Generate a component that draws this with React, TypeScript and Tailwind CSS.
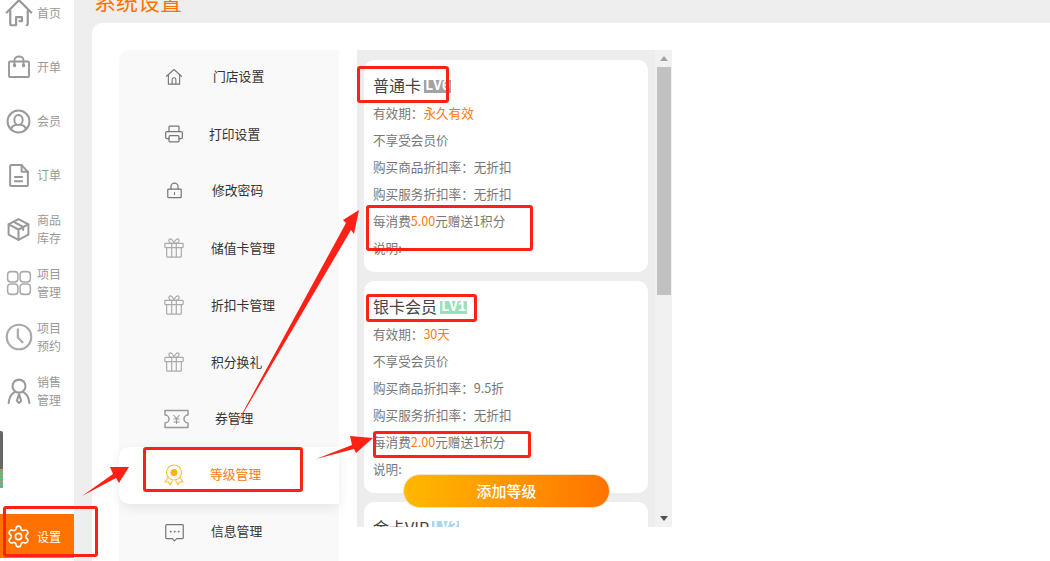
import type { ReactNode } from "react";
import { Settings } from "lucide-react";

const cjk = "font-['Noto_Sans_CJK_SC','Liberation_Sans',sans-serif]";

function Ico(props: { size: number; children: ReactNode; color?: string; sw?: number }) {
  return (
    <svg
      width={props.size}
      height={props.size}
      viewBox="0 0 24 24"
      fill="none"
      stroke={props.color ?? "#999"}
      strokeWidth={props.sw ?? 1.9}
      strokeLinecap="round"
      strokeLinejoin="round"
    >
      {props.children}
    </svg>
  );
}

const homeBig = (
  <Ico size={28}>
    <path d="M1.500 11.500 12 1l10.500 10.500" />
    <path d="M4.500 10v11.500a1 1 0 0 0 1 1h4v-7h5v3.500h-2M18.500 22.500a1 1 0 0 0 1-1V10" />
  </Ico>
);
const bag = (
  <Ico size={24}>
    <rect x="2" y="6.500" width="20" height="15.500" rx="1" />
    <path d="M7.500 10V5a4.500 3.500 0 0 1 9 0v5" />
    <circle cx="7.500" cy="10.500" r=".8" fill="#999" />
    <circle cx="16.500" cy="10.500" r=".8" fill="#999" />
  </Ico>
);
const member = (
  <Ico size={25}>
    <circle cx="12" cy="12" r="10.500" />
    <ellipse cx="12" cy="10.500" rx="4" ry="4.800" />
    <path d="M5 19.500c.5-3 3.500-4 5-4.300M19 19.500c-.5-3-3.500-4-5-4.300" />
  </Ico>
);
const order = (
  <Ico size={25}>
    <path d="M4 3a1 1 0 0 1 1-1h10l6 6.500V21a1 1 0 0 1-1 1H5a1 1 0 0 1-1-1Z" />
    <path d="M15 2v6.500h6M8.500 13.500h7M8.500 17.500h7" />
  </Ico>
);
const box = (
  <Ico size={25}>
    <path d="M12 2 21.500 7v10L12 22 2.500 17V7Z" />
    <path d="M2.500 7 12 12l9.500-5M12 12v10M7 4.500l9.500 5v3" />
  </Ico>
);
const grid = (
  <Ico size={26} color="#aaa" sw={1.400}>
    <rect x="1.500" y="1.500" width="9.500" height="9.500" rx="3" />
    <rect x="13" y="1.500" width="9.500" height="9.500" rx="3" />
    <rect x="1.500" y="13" width="9.500" height="9.500" rx="3" />
    <rect x="13" y="13" width="9.500" height="9.500" rx="3" />
  </Ico>
);
const clock = (
  <Ico size={28} color="#aaa">
    <circle cx="12" cy="12" r="10.500" />
    <path d="M11 5.500v7l4 4" />
  </Ico>
);
const sales = (
  <Ico size={26}>
    <circle cx="12" cy="7.500" r="6" />
    <path d="M8 13c-3 1.500-5 5-5.500 10M16 13c3 1.500 5 5 5.500 10M12 15l-2 6 2 2 2-2Z" />
  </Ico>
);

const navItems: { icon: ReactNode; lines: string[] }[] = [
  { icon: homeBig, lines: ["首页"] },
  { icon: bag, lines: ["开单"] },
  { icon: member, lines: ["会员"] },
  { icon: order, lines: ["订单"] },
  { icon: box, lines: ["商品", "库存"] },
  { icon: grid, lines: ["项目", "管理"] },
  { icon: clock, lines: ["项目", "预约"] },
  { icon: sales, lines: ["销售", "管理"] },
];

const gift = (
  <Ico size={22} color="#aaa" sw={1.300}>
    <rect x="2" y="7" width="20" height="4.500" rx=".8" />
    <path d="M4 11.500V21a1 1 0 0 0 1 1h14a1 1 0 0 0 1-1v-9.500M9.500 7v15M14.500 7v15" />
    <path d="M9.500 7C7 6.500 5.500 4 7 2.500S11 3.500 12 7c1-3.500 3.500-6 5-4.500S17 6.500 14.500 7" />
  </Ico>
);

const menuItems: { icon: ReactNode; label: string; ml: string; active?: boolean }[] = [
  {
    label: "门店设置",
    ml: "mb-[2px] ml-[23px]",
    icon: (
      <Ico size={18} color="#777" sw={1.500}>
        <path d="M2 11 12 2l10 9M4.500 9v12.500h15V9" />
        <path d="M9.500 21.500v-6a2.500 2.500 0 0 1 5 0v6" />
      </Ico>
    ),
  },
  {
    label: "打印设置",
    ml: "ml-[19px]",
    icon: (
      <Ico size={20} color="#777" sw={1.500}>
        <path d="M6 9V3.500a1 1 0 0 1 1-1h10a1 1 0 0 1 1 1V9" />
        <path d="M6 17.500H3.500a1.500 1.500 0 0 1-1.500-1.500v-5.500A1.500 1.500 0 0 1 3.500 9h17a1.500 1.500 0 0 1 1.500 1.500V16a1.500 1.500 0 0 1-1.500 1.500H18" />
        <rect x="6" y="14" width="12" height="7.500" rx="1.500" />
      </Ico>
    ),
  },
  {
    label: "修改密码",
    ml: "mb-[2px] ml-[22px]",
    icon: (
      <Ico size={17} color="#777" sw={1.700}>
        <rect x="2.500" y="10" width="19" height="12" rx="1" />
        <path d="M7 10V6.500a5 5 0 0 1 10 0V10M12 15v2.500" />
      </Ico>
    ),
  },
  { label: "储值卡管理", ml: "ml-[21px]", icon: gift },
  { label: "折扣卡管理", ml: "ml-[21px]", icon: gift },
  { label: "积分换礼", ml: "ml-[21px]", icon: gift },
  {
    label: "券管理",
    ml: "mb-[2px] ml-[25px]",
    icon: (
      <svg width="25" height="20" viewBox="0 0 25 20" fill="none" stroke="#999" strokeWidth="1.500" className="ml-[4px] shrink-0">
        <path d="M1 1.500h23v4.500a4 4 0 0 0 0 8v4.500H1V14a4 4 0 0 0 0-8Z" strokeLinejoin="round" />
        <path d="M9.500 6 12.500 9.500 15.500 6M9.500 10h6M9.500 13h6M12.500 9.500V15" strokeWidth="1.100" />
      </svg>
    ),
  },
  {
    label: "等级管理",
    ml: "mb-[3px] ml-[20px]",
    active: true,
    icon: (
      <svg width="20" height="22" viewBox="0 0 20 22" fill="none" stroke="#ffc23d" strokeWidth="1.200" strokeLinejoin="round" className="mb-[2px]">
        <circle cx="10" cy="8.500" r="7.500" />
        <circle cx="10" cy="8.500" r="3.500" fill="#ffb400" stroke="none" />
        <path d="M4 13.500 1 18l3.500-.2L6 21l2.500-4.500M16 13.500 19 18l-3.500-.2L14 21l-2.500-4.500" />
      </svg>
    ),
  },
  {
    label: "信息管理",
    ml: "mb-[3px] ml-[21px]",
    icon: (
      <Ico size={21} color="#777" sw={1.400}>
        <path d="M3 3h18a1 1 0 0 1 1 1v14a1 1 0 0 1-1 1h-6.500L12 21.500 9.500 19H3a1 1 0 0 1-1-1V4a1 1 0 0 1 1-1Z" />
        <path d="M7.500 11h.5M12 11h.5M16.500 11h.5" strokeWidth="1.800" />
      </Ico>
    ),
  },
];

const cards = [
  {
    name: "普通卡",
    level: "LV0",
    badge: "bg-[#a3a3a3]",
    valid: "永久有效",
    goods: "无折扣",
    spend: "5.00",
  },
  {
    name: "银卡会员",
    level: "LV1",
    badge: "bg-[#9be0ba]",
    valid: "30天",
    goods: "9.5折",
    spend: "2.00",
  },
];

function Badge(props: { level: string; color: string }) {
  return (
    <span className={`ml-[3px] mt-[1px] h-[13px] w-[27px] text-center font-['Liberation_Mono',monospace] text-[14px] font-bold leading-[13px] text-white ${props.color}`}>
      {props.level}
    </span>
  );
}

function Card(props: (typeof cards)[number]) {
  return (
    <div className="h-[212px] shrink-0 rounded-[10px] bg-white pl-[9px] pt-[12px] text-[12.6px] leading-[27px] text-[#777]">
      <div className="flex h-[27px] items-center text-[16px] text-[#444]">
        {props.name}
        <Badge level={props.level} color={props.badge} />
      </div>
      <div>
        有效期：<span className="text-[#ff7a0d]">{props.valid}</span>
      </div>
      <div>不享受会员价</div>
      <div>购买商品折扣率：{props.goods}</div>
      <div>购买服务折扣率：无折扣</div>
      <div>
        每消费<span className="text-[#ff7a0d]">{props.spend}</span>元赠送1积分
      </div>
      <div>说明:</div>
    </div>
  );
}

const boxes = [
  "left-[357px] top-[66px] h-[37px] w-[92px]",
  "left-[366px] top-[205px] h-[46px] w-[167px]",
  "left-[366px] top-[294px] h-[28px] w-[111px]",
  "left-[373px] top-[431px] h-[27px] w-[158px]",
  "left-[143px] top-[447px] h-[45px] w-[160px]",
  "left-[3px] top-[506px] h-[51px] w-[95px]",
];

export default function App() {
  return (
    <div className={`relative flex h-[561px] w-[1050px] overflow-hidden bg-white ${cjk}`}>
      <aside className="flex w-[74px] shrink-0 flex-col bg-white text-[12px] leading-[18px] text-[#999]">
        <nav className="-mt-[14px]">
          {navItems.map((item) => (
            <div key={item.lines.join("")} className="flex h-[54px] items-center">
              <div className="flex w-[37px] shrink-0 justify-center">{item.icon}</div>
              <div>
                {item.lines.map((line) => (
                  <div key={line}>{line}</div>
                ))}
              </div>
            </div>
          ))}
        </nav>
        <div className="mb-[3px] mt-auto flex h-[44px] items-center bg-[#ff7200] text-white">
          <div className="flex w-[37px] shrink-0 justify-center">
            <Settings size={25} strokeWidth={1.5} color="#fff" />
          </div>
          <span className="mt-[2px]">设置</span>
        </div>
      </aside>

      <main className="flex min-w-0 flex-1 flex-col bg-[#eeeeee] pl-[18px]">
        <div className="flex h-[23px] items-end pb-[12px] pl-[2px] text-[22px] leading-[22px] text-[#ff7200]">
          系统设置
        </div>
        <div className="flex flex-1 gap-[18px] rounded-tl-[10px] bg-white pl-[27px] pt-[27px]">
          <div className="h-[511px] w-[220px] shrink-0 rounded-tl-[10px] bg-[#f9f9f9] text-[12.8px] text-[#333]">
            <div className="-mt-[2px]">
              {menuItems.map((item) => (
                <div
                  key={item.label}
                  className={`flex h-[57px] items-center pl-[39px] ${
                    item.active
                      ? "rounded-l-[10px] bg-white text-[#ff7a0d] shadow-[0_4px_12px_rgba(0,0,0,0.08)]"
                      : ""
                  }`}
                >
                  <div className="flex w-[32px] shrink-0 justify-center">{item.icon}</div>
                  <span className={item.ml}>{item.label}</span>
                </div>
              ))}
            </div>
          </div>

          <div className="relative flex h-[477px] w-[315px] shrink-0 bg-[#ededed]">
            <div className="flex min-w-0 flex-1 flex-col gap-[9px] overflow-hidden px-[7px] pt-[10px]">
              {cards.map((c) => (
                <Card key={c.name} {...c} />
              ))}
              <div className="h-[60px] shrink-0 rounded-[10px] bg-white pl-[9px] pt-[11px]">
                <div className="flex h-[27px] items-center text-[16px] text-[#444]">
                  金卡VIP
                  <Badge level="LV2" color="bg-[#a9d8f2]" />
                </div>
              </div>
            </div>
            <div className="flex w-[17px] shrink-0 flex-col items-center bg-[#f1f1f1]">
              <div className="flex h-[17px] items-center justify-center">
                <div className="h-0 w-0 border-x-[4px] border-b-[5px] border-x-transparent border-b-[#a3a3a3]" />
              </div>
              <div className="h-[228px] w-[14px] bg-[#c1c1c1]" />
              <div className="mt-auto flex h-[17px] items-center justify-center">
                <div className="h-0 w-0 border-x-[4px] border-t-[5px] border-x-transparent border-t-[#505050]" />
              </div>
            </div>
            <button className="absolute left-[46px] top-[424px] h-[34px] w-[207px] rounded-full border border-[#f3e2c4] bg-gradient-to-r from-[#ffb800] to-[#ff7300] text-[15px] font-medium text-white">
              添加等级
            </button>
          </div>
        </div>
      </main>

      {/* leftover widget peeking in at the left edge */}
      <div className="absolute left-0 top-[431px] flex h-[57px] w-[3px] items-end rounded-r-[2px] bg-[#666]">
        <div className="h-[19px] w-full bg-[repeating-linear-gradient(180deg,#4fd06a_0,#4fd06a_1px,#8a9a8c_1px,#8a9a8c_3px)]" />
      </div>

      {/* red annotations */}
      {boxes.map((b) => (
        <div key={b} className={`pointer-events-none absolute rounded-[3px] border-[3px] border-[#ff2116] ${b}`} />
      ))}
      <svg className="pointer-events-none absolute left-0 top-0" width="1050" height="561" fill="#ff2116">
        <polygon points="82,496 113,474 110,467 129,467 119,483 116,478" />
        <polygon points="231,434 346,223 343,220 359,210 354,234 351,230" />
        <polygon points="316,459 352,445 350,436 373,438 356,453 354,449" />
      </svg>
    </div>
  );
}
